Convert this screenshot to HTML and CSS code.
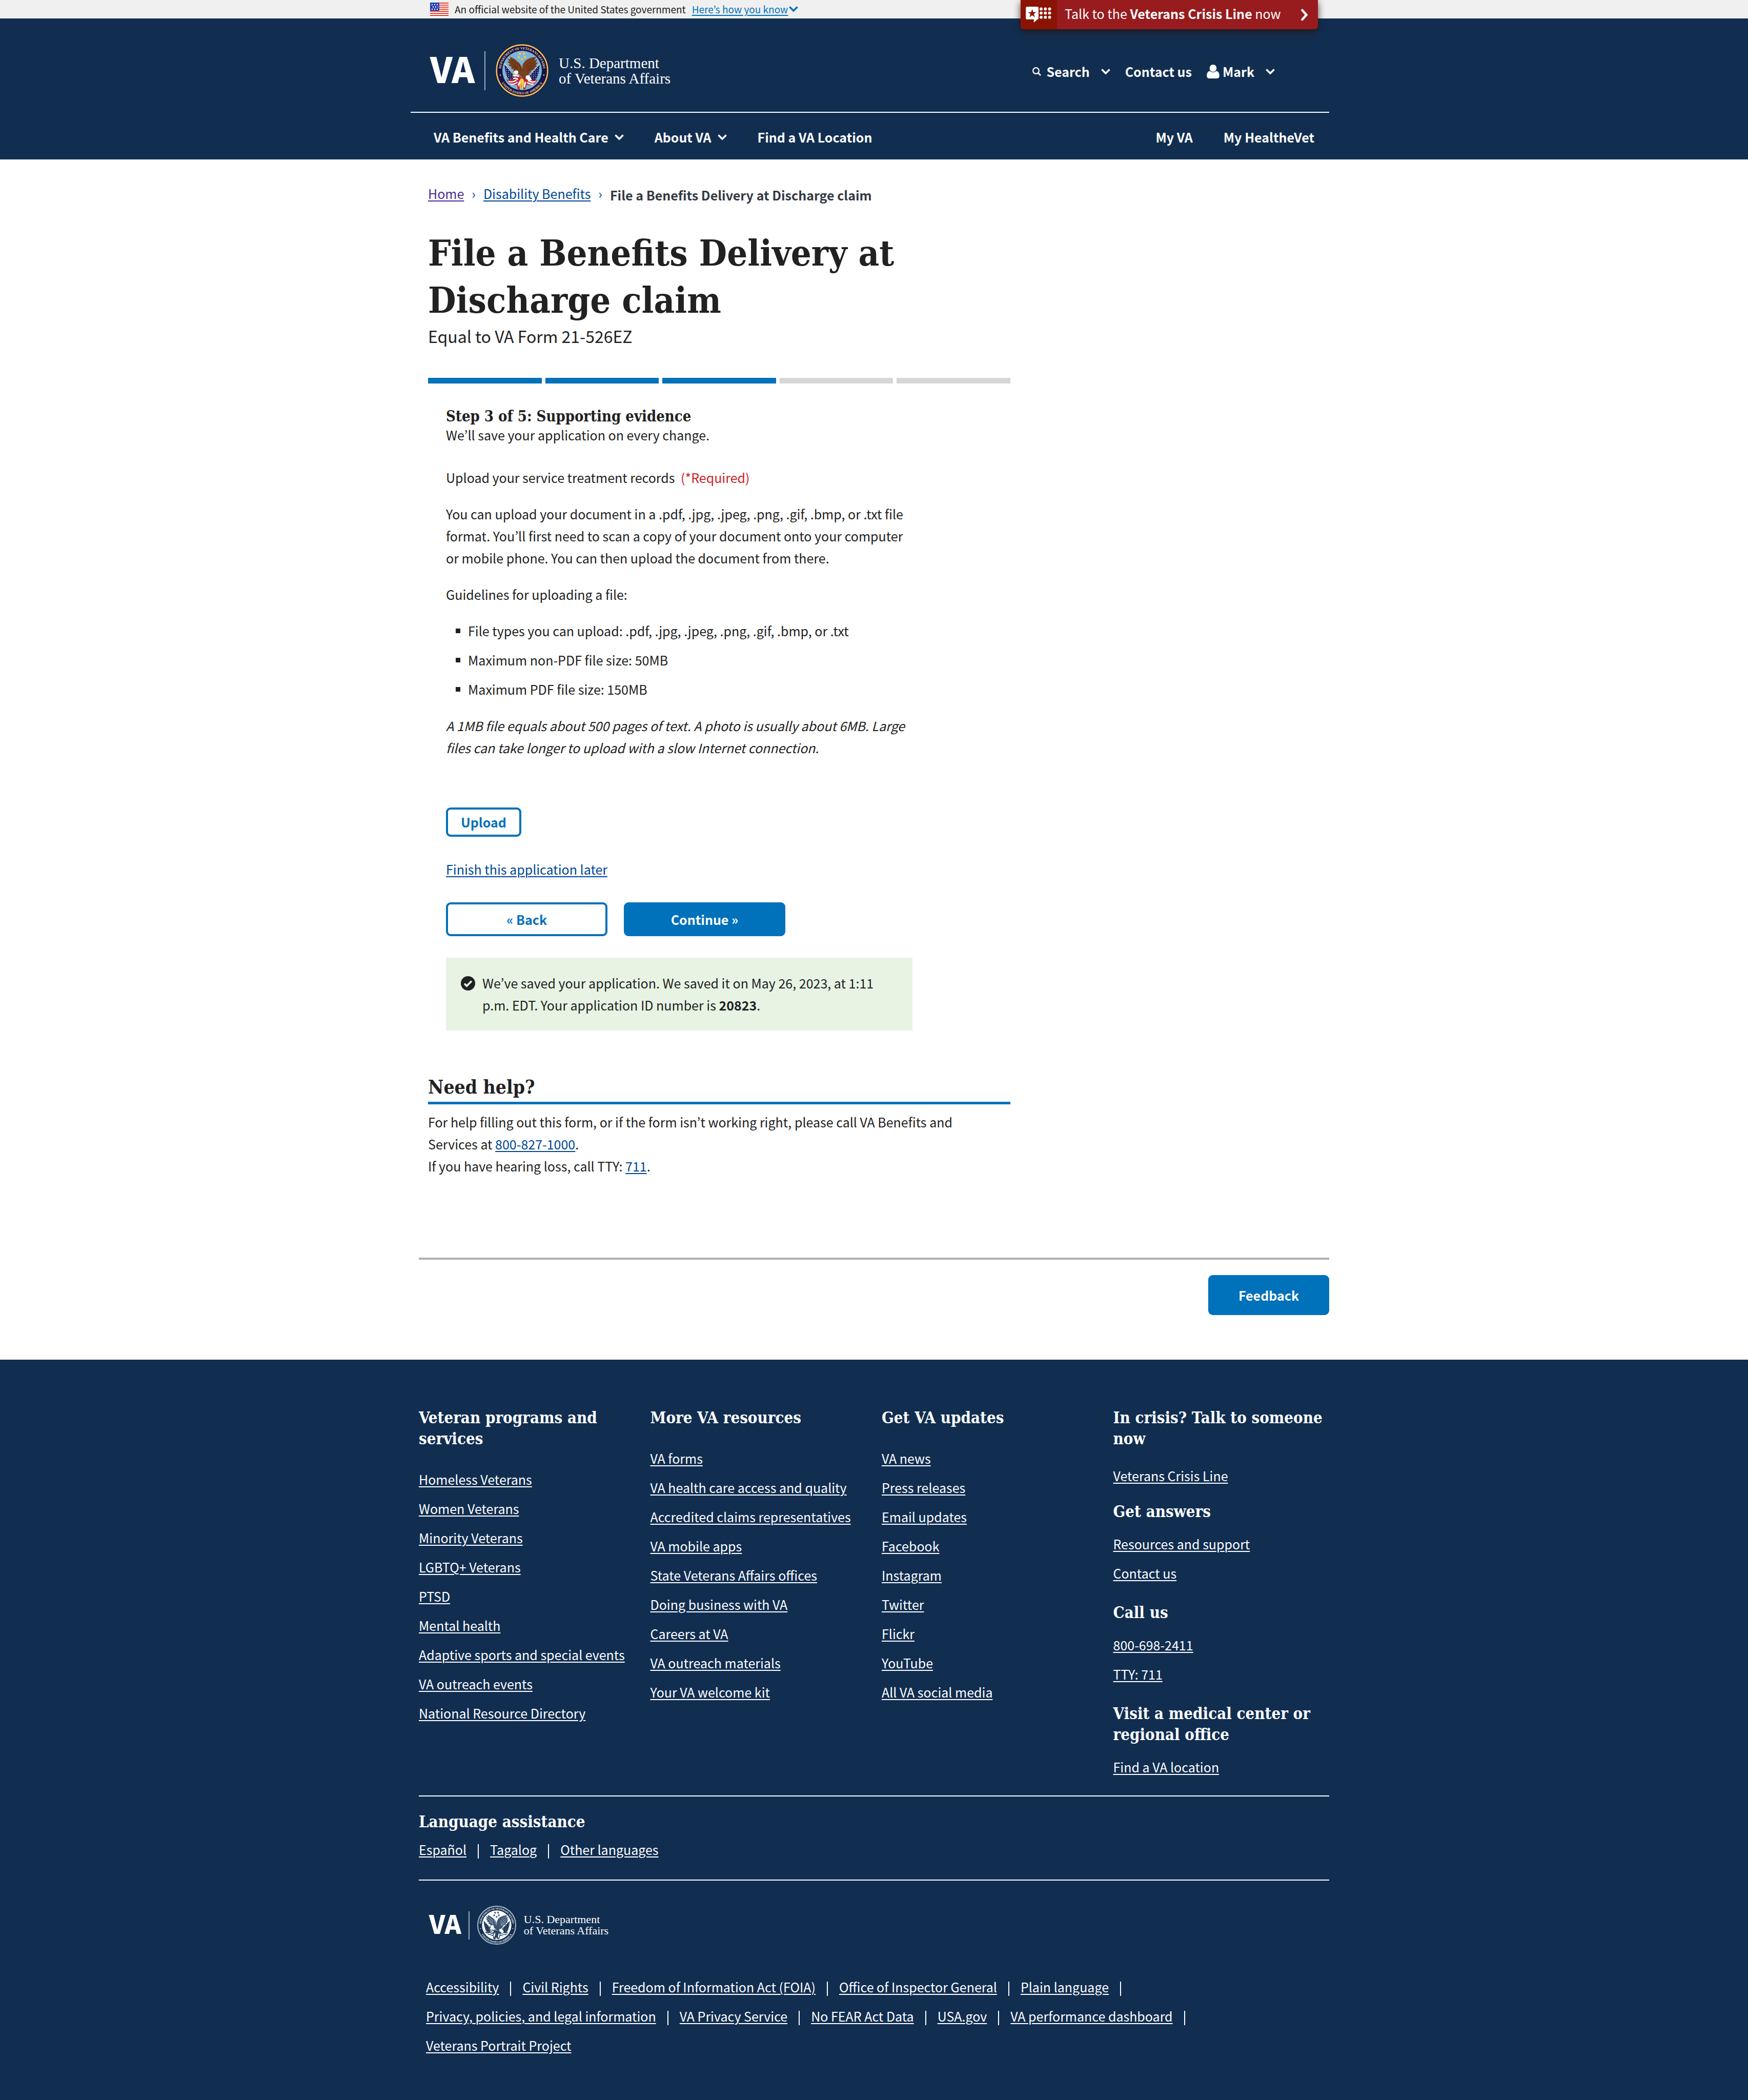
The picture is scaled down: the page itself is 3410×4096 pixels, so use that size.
FILE: index.html
```html
<!DOCTYPE html>
<html lang="en">
<head>
<meta charset="utf-8">
<meta name="viewport" content="width=device-width, initial-scale=1">
<title>File a Benefits Delivery at Discharge claim | Veterans Affairs</title>
<link rel="stylesheet" href="styles.css">
</head>
<body>
<svg class="sprite" aria-hidden="true">
  <symbol id="chevron" viewBox="0 0 18 12"><path d="M2.5 2.5 9 9l6.500-6.500" fill="none" stroke="currentColor" stroke-width="3.600" stroke-linecap="round" stroke-linejoin="miter"/></symbol>
</svg>

<div class="gov-banner">
  <div class="container gov-banner-inner">
    <svg class="flag" viewBox="0 0 36 26" aria-hidden="true">
      <rect width="36" height="26" fill="#fff"/>
      <path d="M0 1h36M0 5h36M0 9h36M0 13h36M0 17h36M0 21h36M0 25h36" stroke="#e0402a" stroke-width="2"/>
      <rect width="18" height="16" fill="#1f3fb5"/>
      <path d="M3 4h13M5 8.500h11M3 13h13" stroke="#fff" stroke-width="2.500" stroke-dasharray="2 3"/>
    </svg>
    <span>An official website of the United States government</span>
    <button type="button" class="know"><span class="know-text">Here’s how you know</span><svg class="know-chevron"><use href="#chevron"/></svg></button>
    <a class="crisis" href="#crisis">
      <span class="crisis-mark">
        <svg viewBox="0 0 168 105" aria-hidden="true">
          <path fill="#fff" d="M9 0h66a9 9 0 0 1 9 9v66a9 9 0 0 1-7 9L53 105V84H9a9 9 0 0 1-9-9V9a9 9 0 0 1 9-9Z"/>
          <path fill="#8b1303" d="m42 16 7 20h21L53 48l7 22-18-13-18 13 7-22-17-12h21Z"/>
          <g fill="#fff"><circle cx="101" cy="15" r="10"/><circle cx="129" cy="15" r="10"/><circle cx="157" cy="15" r="10"/><circle cx="101" cy="42" r="10"/><circle cx="129" cy="42" r="10"/><circle cx="157" cy="42" r="10"/><circle cx="101" cy="70" r="10"/><circle cx="129" cy="70" r="10"/><circle cx="157" cy="70" r="10"/></g>
        </svg>
      </span>
      <span class="crisis-text">Talk to the <strong>Veterans Crisis Line</strong> now</span>
      <svg class="crisis-arrow" viewBox="0 0 16 24" aria-hidden="true"><path d="m3.500 3 8 9-8 9" fill="none" stroke="#fff" stroke-width="4.500" stroke-linecap="round"/></svg>
    </a>
  </div>
</div>

<header class="header">
  <div class="container">
    <div class="header-top">
      <a class="logo" href="#home">
        <span class="logo-va">VA</span>
        <span class="logo-bar"></span>
        <svg class="seal seal-color" viewBox="0 0 354 354" aria-hidden="true">
          <defs>
            <path id="seal-top" d="M38 177a139 139 0 0 1 278 0"/>
            <path id="seal-bottom" d="M20 177a157 157 0 0 0 314 0"/>
            <path id="star" d="M0-11 3-3.500 11-3.300 4.600 1.700 7 9.500 0 5-7 9.500-4.600 1.700-11-3.300-3-3.500Z"/>
          </defs>
          <g id="seal">
            <circle class="seal-band" cx="177" cy="177" r="176"/>
            <circle class="seal-ring" cx="177" cy="177" r="168" fill="none" stroke-width="9"/>
            <circle class="seal-rope" cx="177" cy="177" r="168" fill="none" stroke-width="5" stroke-dasharray="4 5"/>
            <circle class="seal-sky" cx="177" cy="177" r="130"/>
            <text class="seal-text"><textPath href="#seal-top" startOffset="50%">DEPARTMENT OF VETERANS AFFAIRS</textPath></text>
            <text class="seal-text"><textPath href="#seal-bottom" startOffset="50%">UNITED STATES OF AMERICA</textPath></text>
            <circle class="seal-dot" cx="34" cy="207" r="4"/><circle class="seal-dot" cx="320" cy="207" r="4"/>
            <!-- flags -->
            <path class="seal-blue" d="M62 136c2 40 8 78 30 104 14 4 30 0 36-12l-6-30Z"/>
            <path class="seal-blue" d="M292 138c-2 40-8 78-30 104-14 4-30 0-40-14l2-24Z"/>
            <path class="seal-pole" d="M60 132 150 238M293 134 200 238" fill="none" stroke-width="3.500"/>
            <path class="seal-dots" d="M74 162v60M88 176v58M102 192v44M116 208v24M280 162v60M266 176v58M252 190v46M238 204v26" fill="none" stroke-width="4" stroke-dasharray="4 9"/>
            <path class="seal-red" d="M74 236c20 4 36 2 52-10l18-22 34 22 38 10c20 6 42 8 60 0-6 22-20 36-38 36-10 4-22 0-30-2l-8 26-12 6-14-20-14 22-12-6-4-26c-18 2-28 0-40-10-16-8-28-18-30-26Z"/>
            <path class="seal-white" d="M84 244c20 8 38 4 54-8l4 8c-16 10-34 16-52 8ZM96 262c18 4 34 0 50-12l2 8c-14 10-26 16-44 12ZM116 208c14-6 30-4 42 6l-4 8c-12-8-24-10-38-6ZM118 226c12-6 26-2 34 6l-4 8c-10-8-20-8-30-6ZM270 244c-20 8-36 4-52-6l-4 8c16 10 34 14 50 8ZM256 262c-18 2-32-2-44-10l-4 8c14 8 24 12 40 12ZM148 268l14-26 6 4-12 40ZM190 266l6-18 8 6-8 36-8-4Z"/>
            <path class="seal-gold" d="M166 230h20l4 22-6 48-8-6-4-34-4 40-8-4 4-40Z"/>
            <!-- eagle -->
            <path class="seal-brown" d="M98 86c18 8 34 18 48 32 14 10 24 22 28 40l4 16c-2-30 6-46 20-60 20-18 46-24 72-26l-12 22 20-6-12 22 16 0-16 18 10 4-20 14 4 6-22 10-14 20c-6 10-14 16-22 20l-4 16-14 2-8-16c-8-2-14-10-18-18l-26-6 6-12-20-2 6-10-22-10 8-6-24-16 12-4-20-18 16 0-14-20 20 6Z"/>
            <path class="seal-feather" d="M106 104l40 36M98 120l46 34M112 146l36 20M156 132l18 46M250 102l-44 44M258 118l-50 44M262 134l-50 40M254 154l-42 28" fill="none" stroke-width="3"/>
            <path class="seal-white" d="M126 182c6-8 20-8 26 2l-2 16-14 4-8-10-8 6c-2-8 0-14 6-18Z"/>
            <path class="seal-white" d="M200 214c12-8 24-6 32 6 4 8 6 14 10 18-14 8-28 4-36-6Z"/>
            <path class="seal-gold" d="M118 190l10-2-2 8-8 6Z"/>
            <g class="seal-gold"><use href="#star" x="163" y="66"/><use href="#star" x="189" y="66"/><use href="#star" x="155" y="89"/><use href="#star" x="196" y="89"/><use href="#star" x="176" y="103"/></g>
          </g>
        </svg>
        <span class="logo-name">U.S. Department<br>of Veterans Affairs</span>
      </a>
      <div class="tools">
        <button type="button" class="tool">
          <svg class="icon-search" viewBox="0 0 17 17" aria-hidden="true"><circle cx="7" cy="7" r="5.800" fill="none" stroke="currentColor" stroke-width="2.200"/><path d="m11 11 5 5" stroke="currentColor" stroke-width="2.600"/></svg>
          <span class="tool-label">Search</span>
          <svg class="chevron"><use href="#chevron"/></svg>
        </button>
        <a class="tool" href="#contact">Contact us</a>
        <button type="button" class="tool user">
          <svg class="icon-user" viewBox="0 0 80 88" aria-hidden="true"><path fill="currentColor" d="M40 0c13 0 22 10 22 23S53 46 40 46 18 36 18 23 27 0 40 0ZM20 41c6 6 13 8 20 8s14-2 20-8c14 2 20 13 20 31 0 10-5 16-14 16H14C5 88 0 82 0 72c0-18 6-29 20-31Z"/></svg>
          <span class="tool-label">Mark</span>
          <svg class="chevron"><use href="#chevron"/></svg>
        </button>
      </div>
    </div>
    <nav class="nav">
      <button type="button">VA Benefits and Health Care <svg class="chevron"><use href="#chevron"/></svg></button>
      <button type="button">About VA <svg class="chevron"><use href="#chevron"/></svg></button>
      <a href="#locations">Find a VA Location</a>
      <a class="nav-end" href="#my-va">My VA</a>
      <a href="#mhv">My HealtheVet</a>
    </nav>
  </div>
</header>

<main class="container main">
  <div class="content">
    <ol class="breadcrumb">
      <li><a class="visited" href="#home">Home</a></li>
      <li><a href="#disability">Disability Benefits</a></li>
      <li class="current" aria-current="page">File a Benefits Delivery at Discharge claim</li>
    </ol>
    <h1>File a Benefits Delivery at Discharge claim</h1>
    <p class="subtitle">Equal to VA Form 21-526EZ</p>
    <div class="progress" role="progressbar" aria-label="Form progress" aria-valuemin="1" aria-valuemax="5" aria-valuenow="3">
      <span class="done"></span><span class="done"></span><span class="done"></span><span></span><span></span>
    </div>
    <form class="form">
      <h2 class="step">Step 3 of 5: Supporting evidence</h2>
      <p>We’ll save your application on every change.</p>
      <label class="field-label" for="upload">Upload your service treatment records <span class="required">(*Required)</span></label>
      <div class="hint">
        <p>You can upload your document in a .pdf, .jpg, .jpeg, .png, .gif, .bmp, or .txt file format. You’ll first need to scan a copy of your document onto your computer or mobile phone. You can then upload the document from there.</p>
        <p>Guidelines for uploading a file:</p>
        <ul>
          <li>File types you can upload: .pdf, .jpg, .jpeg, .png, .gif, .bmp, or .txt</li>
          <li>Maximum non-PDF file size: 50MB</li>
          <li>Maximum PDF file size: 150MB</li>
        </ul>
        <p><em>A 1MB file equals about 500 pages of text. A photo is usually about 6MB. Large files can take longer to upload with a slow Internet connection.</em></p>
      </div>
      <button type="button" id="upload" class="btn outline upload">Upload</button>
      <a class="finish" href="#later">Finish this application later</a>
      <div class="actions">
        <button type="button" class="btn outline">« Back</button>
        <button type="submit" class="btn solid">Continue »</button>
      </div>
      <div class="alert" role="status">
        <svg viewBox="0 0 28 28" aria-hidden="true"><circle cx="14" cy="14" r="14" fill="#212121"/><path d="m7 14.500 4.500 4.500L21 9.500" fill="none" stroke="#e7f4e4" stroke-width="3.800"/></svg>
        <p>We’ve saved your application. We saved it on May 26, 2023, at 1:11 p.m. EDT. Your application ID number is <strong>20823</strong>.</p>
      </div>
    </form>
    <section class="help">
      <h2>Need help?</h2>
      <p>For help filling out this form, or if the form isn’t working right, please call VA Benefits and Services at <a href="tel:8008271000">800-827-1000</a>.<br>If you have hearing loss, call TTY: <a href="tel:711">711</a>.</p>
    </section>
  </div>
  <div class="feedback"><button type="button" class="btn solid">Feedback</button></div>
</main>

<footer class="footer">
  <div class="container">
    <div class="footer-columns">
      <section>
        <h2>Veteran programs and services</h2>
        <ul>
          <li><a href="#f">Homeless Veterans</a></li><li><a href="#f">Women Veterans</a></li><li><a href="#f">Minority Veterans</a></li><li><a href="#f">LGBTQ+ Veterans</a></li><li><a href="#f">PTSD</a></li><li><a href="#f">Mental health</a></li><li><a href="#f">Adaptive sports and special events</a></li><li><a href="#f">VA outreach events</a></li><li><a href="#f">National Resource Directory</a></li>
        </ul>
      </section>
      <section>
        <h2>More VA resources</h2>
        <ul>
          <li><a href="#f">VA forms</a></li><li><a href="#f">VA health care access and quality</a></li><li><a href="#f">Accredited claims representatives</a></li><li><a href="#f">VA mobile apps</a></li><li><a href="#f">State Veterans Affairs offices</a></li><li><a href="#f">Doing business with VA</a></li><li><a href="#f">Careers at VA</a></li><li><a href="#f">VA outreach materials</a></li><li><a href="#f">Your VA welcome kit</a></li>
        </ul>
      </section>
      <section>
        <h2>Get VA updates</h2>
        <ul>
          <li><a href="#f">VA news</a></li><li><a href="#f">Press releases</a></li><li><a href="#f">Email updates</a></li><li><a href="#f">Facebook</a></li><li><a href="#f">Instagram</a></li><li><a href="#f">Twitter</a></li><li><a href="#f">Flickr</a></li><li><a href="#f">YouTube</a></li><li><a href="#f">All VA social media</a></li>
        </ul>
      </section>
      <section class="contact">
        <h2>In crisis? Talk to someone now</h2>
        <ul class="crisis-list"><li><a href="#f">Veterans Crisis Line</a></li></ul>
        <h2>Get answers</h2>
        <ul><li><a href="#f">Resources and support</a></li><li><a href="#f">Contact us</a></li></ul>
        <h2>Call us</h2>
        <ul><li><a href="tel:8006982411">800-698-2411</a></li><li><a href="tel:711">TTY: 711</a></li></ul>
        <h2>Visit a medical center or regional office</h2>
        <ul><li><a href="#f">Find a VA location</a></li></ul>
      </section>
    </div>
    <section class="language">
      <h2>Language assistance</h2>
      <ul class="inline-links"><li><a href="#es">Español</a></li><li><a href="#tl">Tagalog</a></li><li><a href="#other">Other languages</a></li></ul>
    </section>
    <a class="logo logo-small" href="#home">
      <span class="logo-va">VA</span>
      <span class="logo-bar"></span>
      <svg class="seal seal-mono" viewBox="0 0 354 354" aria-hidden="true"><use href="#seal"/></svg>
      <span class="logo-name">U.S. Department<br>of Veterans Affairs</span>
    </a>
    <ul class="inline-links legal">
      <li><a href="#f">Accessibility</a></li><li><a href="#f">Civil Rights</a></li><li><a href="#f">Freedom of Information Act (FOIA)</a></li><li><a href="#f">Office of Inspector General</a></li><li><a href="#f">Plain language</a></li><li><a href="#f">Privacy, policies, and legal information</a></li><li><a href="#f">VA Privacy Service</a></li><li><a href="#f">No FEAR Act Data</a></li><li><a href="#f">USA.gov</a></li><li><a href="#f">VA performance dashboard</a></li><li><a href="#f">Veterans Portrait Project</a></li>
    </ul>
  </div>
</footer>
</body>
</html>
```

FILE: styles.css
```css
:root {
  --navy: #112e51;
  --blue: #0071bb;
  --link: #004795;
  --ink: #212121;
}

* { box-sizing: border-box; }

body {
  margin: 0;
  background: #fff;
  color: var(--ink);
  font: 25px/43px "Noto Sans CJK KR", "Noto Sans", sans-serif;
}

h1, h2, p, ul, ol { margin: 0; padding: 0; }
h1, h2 { font-family: "DejaVu Serif Condensed", "DejaVu Serif", serif; font-weight: 700; }
ul, ol { list-style: none; }
button { margin: 0; padding: 0; border: 0; background: none; color: inherit; font: inherit; cursor: pointer; }
a { color: var(--link); text-decoration: underline 2px; text-underline-offset: 3px; }
svg { display: block; flex: none; }

.sprite { position: absolute; width: 0; height: 0; }
.container { max-width: 1776px; margin: 0 auto; }

/* Government banner */
.gov-banner { background: #f0f0f0; font-size: 19px; line-height: 36px; }
.gov-banner-inner { position: relative; display: flex; align-items: center; height: 36px; padding-left: 22px; }
.flag { width: 36px; height: 26px; margin-right: 12px; }
.know { display: flex; align-items: center; gap: 2px; margin-left: 12px; color: var(--blue); }
.know-text { text-decoration: underline 2px; text-underline-offset: 3px; }
.know-chevron { width: 18px; height: 12px; }

.crisis {
  position: absolute;
  top: 0;
  right: 22px;
  display: flex;
  align-items: center;
  width: 580px;
  height: 57px;
  padding-right: 18px;
  border-radius: 0 0 7px 7px;
  background: #981b1e;
  box-shadow: 0 5px 14px rgba(40, 20, 10, .8);
  color: #fff;
  line-height: 53px;
  font-size: 25px;
  text-decoration: none;
}
.crisis-mark { display: flex; align-items: center; align-self: stretch; width: 71px; margin-right: 15px; padding-left: 10px; border-radius: 0 0 0 7px; background: #8b1303; }
.crisis-mark svg { width: 50px; height: 31px; }
.crisis-text { padding-bottom: 4px; }
.crisis-arrow { width: 16px; height: 24px; margin-left: auto; }

/* Header */
.header { background: var(--navy); color: #fff; }
.header a { color: #fff; text-decoration: none; }
.header-top { display: flex; align-items: center; justify-content: space-between; padding: 49px 106px 28px 22px; }

.logo { display: flex; align-items: center; gap: 19px; color: #fff; text-decoration: none; }
.logo-va { padding-bottom: 10px; font-size: 68px; font-weight: 900; line-height: 70px; }
.logo-bar { width: 2px; height: 76px; background: #fff; opacity: .6; }
.seal { width: 105px; height: 105px; }
.logo-name { font: 29px/30px "Liberation Serif", serif; }

.seal-color { --band: #17134a; --ring: #f0b53a; --rope: #fbe08a; --sky: #7db4d6; --lettering: #f0dfa0; --field: #1d2360; --stripe: #c4202f; --white: #fff; --gold: #f5cf4a; --wing: #7a3f1c; --feather: #4c210c; }
.seal-mono { --band: #112e51; --ring: #dfe4ea; --rope: #112e51; --sky: #fff; --lettering: #fff; --field: #112e51; --stripe: #2b4566; --white: #fff; --gold: #2b4566; --wing: #3b5373; --feather: #fff; }
.seal-band { fill: var(--band); }
.seal-ring { stroke: var(--ring); }
.seal-rope { stroke: var(--rope); }
.seal-sky { fill: var(--sky); }
.seal-text { fill: var(--lettering); font: 700 22px "Liberation Serif", serif; text-anchor: middle; }
.seal-dot { fill: var(--lettering); }
.seal-blue { fill: var(--field); }
.seal-pole, .seal-dots { stroke: var(--white); }
.seal-red { fill: var(--stripe); }
.seal-white { fill: var(--white); }
.seal-gold { fill: var(--gold); }
.seal-brown { fill: var(--wing); }
.seal-feather { stroke: var(--feather); }

.tools { display: flex; align-items: center; gap: 29px; padding-top: 4px; font-weight: 700; }
.tool { display: flex; align-items: center; gap: 10px; }
.tool.user { gap: 6px; }
.tool-label { margin-right: 12px; }
.tool.user .tool-label { margin-right: 16px; }
.icon-search { width: 17px; height: 17px; }
.icon-user { width: 25px; height: 27px; }
.chevron { width: 18px; height: 12px; }

.nav { display: flex; align-items: center; gap: 60px; margin-left: -16px; padding: 26px 29px 22px 45px; border-top: 2px solid #fff; font-weight: 700; }
.nav button { display: flex; align-items: center; gap: 12px; }
.nav-end { margin-left: auto; }

/* Main content */
.content { max-width: 1154px; padding: 48px 0 0 18px; }
.breadcrumb { display: flex; align-items: flex-start; line-height: 36px; }
.breadcrumb li:not(:last-child)::after { content: "›"; margin: 0 15px; color: var(--link); }
.breadcrumb .visited { color: #4c2c92; }
.breadcrumb .current { color: #323a45; font-weight: 700; line-height: 43px; }

h1 { margin-top: 46px; font-size: 70px; line-height: 92px; }
.subtitle { margin-top: 3px; font-size: 32px; line-height: 40px; }
.progress { display: grid; grid-template-columns: repeat(5, 1fr); gap: 7px; margin-top: 62px; }
.progress span { height: 11px; background: #d6d7d9; }
.progress .done { background: var(--blue); }

.form { display: flex; flex-direction: column; align-items: flex-start; max-width: 945px; padding: 49px 0 0 35px; }
.step { font-size: 29px; line-height: 30px; }
.field-label { margin: 40px 0 28px; }
.required { margin-left: 6px; color: #cd2026; }
.hint { display: flex; flex-direction: column; gap: 28px; }
.hint ul { display: flex; flex-direction: column; gap: 14px; padding-left: 19px; }
.hint li { display: flex; align-items: center; gap: 15px; }
.hint li::before { content: ""; width: 9px; height: 9px; background: var(--ink); }

.btn { border: 4px solid var(--blue); border-radius: 9px; font-weight: 700; text-align: center; }
.outline { background: #fff; color: var(--blue); }
.solid { background: var(--blue); color: #fff; }
.upload { height: 57px; margin-top: 95px; padding: 0 25px; }
.finish { margin: 42px 0 43px; }
.actions { display: flex; gap: 32px; }
.actions .btn { width: 315px; height: 66px; }

.alert { display: flex; gap: 14px; align-self: stretch; margin-top: 42px; padding: 28px 28px 28px 29px; background: #e7f4e4; }
.alert svg { width: 28px; height: 28px; margin-top: 8px; }

.help { margin-top: 86px; }
.help h2 { margin-bottom: 13px; padding-bottom: 5px; border-bottom: 5px solid var(--blue); font-size: 37px; line-height: 48px; }
.help p { max-width: 1080px; }

.feedback { display: flex; justify-content: flex-end; margin-top: 157px; padding: 30px 0 87px; border-top: 4px solid #aeb0b5; }
.feedback .btn { width: 236px; height: 78px; }

/* Footer */
.footer { padding: 93px 0 85px; background: var(--navy); color: #fff; }
.footer a { color: #fff; }
.footer h2 { font-size: 31px; line-height: 41px; }
.footer-columns { display: grid; grid-template-columns: repeat(4, 1fr); gap: 30px; padding-bottom: 34px; }
.footer-columns ul { display: flex; flex-direction: column; gap: 14px; margin-top: 37px; }
.footer-columns .contact ul { margin: 21px 0 35px; }
.footer-columns .contact .crisis-list { margin: 30px 0 28px; }
.footer-columns .contact ul:last-child { margin-bottom: 0; }
.language { padding: 29px 0 37px; border-top: 2px solid #fff; border-bottom: 2px solid #fff; }
.inline-links { display: flex; flex-wrap: wrap; gap: 14px 22px; margin-top: 12px; }
.inline-links li { display: flex; }
.inline-links li:not(:last-child)::after { content: ""; width: 2px; height: 28px; margin: 11px 0 0 22px; background: #fff; }

.logo-small { gap: 14px; margin: 48px 0 60px; padding-left: 20px; }
.logo-small .logo-va { padding-bottom: 8px; font-size: 49px; line-height: 52px; }
.logo-small .logo-bar { height: 55px; }
.logo-small .seal { width: 78px; height: 78px; }
.logo-small .logo-name { font-size: 22px; line-height: 22px; }
.legal { padding-left: 14px; }
```
